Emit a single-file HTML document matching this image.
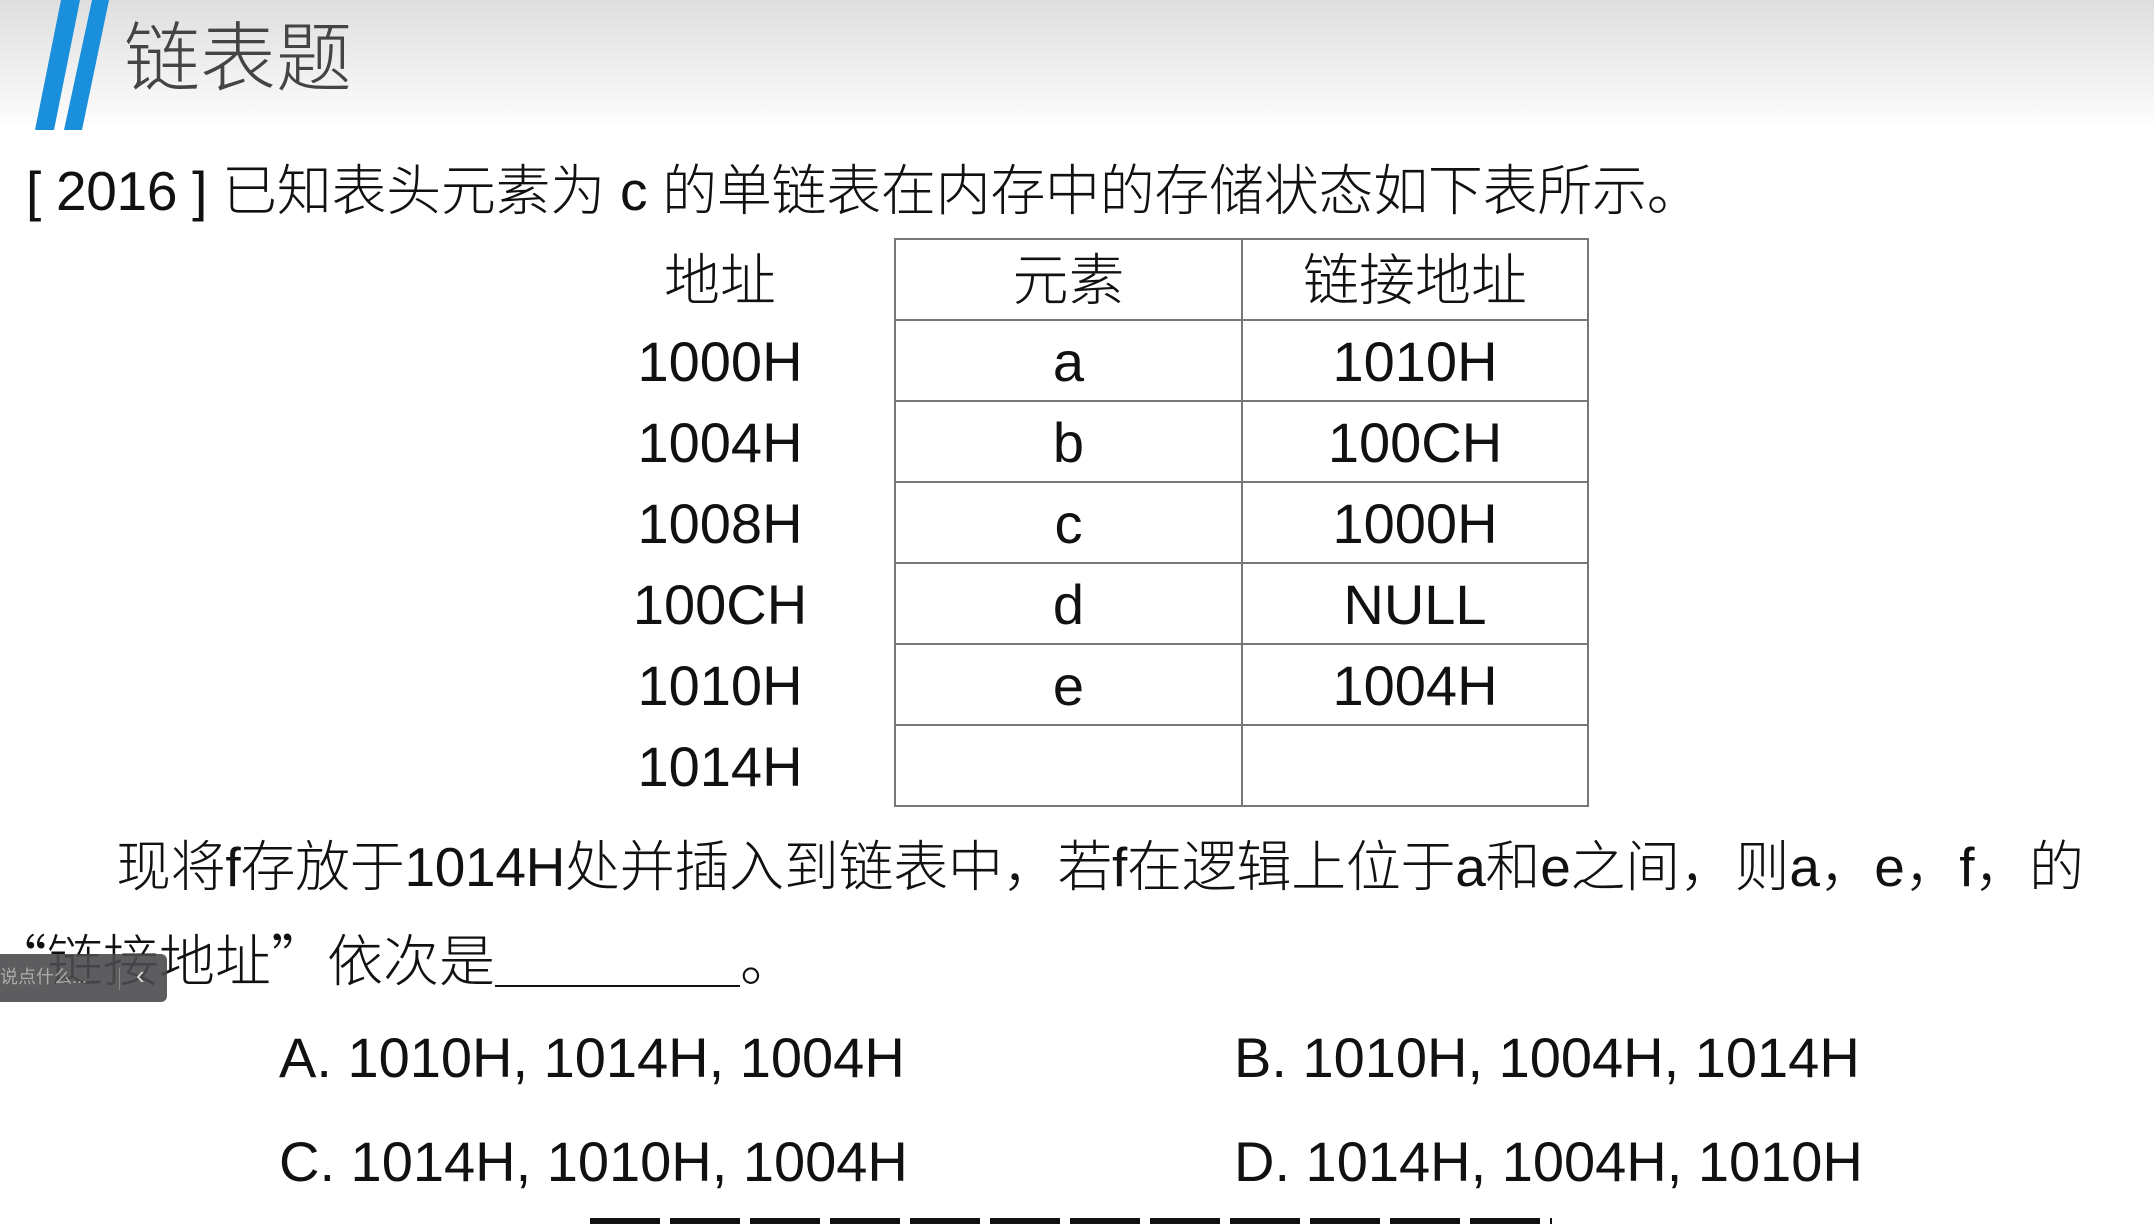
<!DOCTYPE html>
<html><head><meta charset="utf-8"><style>
html,body{margin:0;padding:0;width:2154px;height:1224px;overflow:hidden;background:#fff}
body{position:relative;font-family:"Liberation Sans","Noto Sans CJK SC",sans-serif;color:#111}
.a{position:absolute;white-space:nowrap;line-height:1}
.hdr{position:absolute;left:0;top:0;width:2154px;height:130px;background:linear-gradient(#dedede,#fbfbfb 90%,#fff)}
.t{font-size:56px;font-weight:300}
.q{font-family:"Noto Sans CJK SC",sans-serif}
.c{position:absolute;text-align:center;font-size:56px;line-height:81px;font-weight:300}
.h{position:absolute;background:#777;height:2px;left:894px;width:695px}
.v{position:absolute;background:#777;width:2px;top:238px;height:569px}
</style></head><body>
<div class="hdr"></div>
<svg class="a" style="left:0;top:0" width="130" height="135">
<polygon points="61,0 80,0 54,130 35,130" fill="#1a90dc"/>
<polygon points="92,0 109,0 82,130 64,130" fill="#1a90dc"/>
</svg>
<div class="a" style="left:124px;top:22px;font-size:76px;color:#444;font-weight:300">链表题</div>
<div class="a t" style="left:26px;top:164px;font-size:55px;letter-spacing:-0.3px">[ 2016 ] 已知表头元素为 c 的单链表在内存中的存储状态如下表所示。</div>

<div class="h" style="top:238px"></div>
<div class="h" style="top:319px"></div>
<div class="h" style="top:400px"></div>
<div class="h" style="top:481px"></div>
<div class="h" style="top:562px"></div>
<div class="h" style="top:643px"></div>
<div class="h" style="top:724px"></div>
<div class="h" style="top:805px"></div>
<div class="v" style="left:894px"></div>
<div class="v" style="left:1241px"></div>
<div class="v" style="left:1587px"></div>

<div class="c" style="left:560px;width:320px;top:240px">地址<br>1000H<br>1004H<br>1008H<br>100CH<br>1010H<br>1014H</div>
<div class="c" style="left:896px;width:345px;top:240px">元素<br>a<br>b<br>c<br>d<br>e<br>&nbsp;</div>
<div class="c" style="left:1243px;width:344px;top:240px">链接地址<br>1010H<br>100CH<br>1000H<br>NULL<br>1004H<br>&nbsp;</div>

<div class="a t" style="left:116px;top:840px;font-size:55px;letter-spacing:-0.3px">现将f存放于1014H处并插入到链表中，若f在逻辑上位于a和e之间，则a，e，f，的</div>
<div class="a t" style="left:-9px;top:930px"><span class="q">“</span>链接地址<span class="q">”</span>依次是<span style="display:inline-block;width:245px;border-bottom:2px solid #111;height:50px;vertical-align:-6px"></span>。</div>

<div class="a" style="left:0;top:954px;width:167px;height:48px;background:rgba(75,75,78,0.9);border-radius:0 6px 6px 0"></div>
<div class="a" style="left:0;top:968px;font-size:18px;color:#aaa">说点什么...</div>
<div class="a" style="left:119px;top:968px;width:1px;height:22px;background:#888"></div>
<div class="a" style="left:136px;top:962px;font-size:26px;color:#ddd">‹</div>

<div class="a t" style="left:279px;top:1030px">A. 1010H, 1014H, 1004H</div>
<div class="a t" style="left:1234px;top:1030px">B. 1010H, 1004H, 1014H</div>
<div class="a t" style="left:279px;top:1134px">C. 1014H, 1010H, 1004H</div>
<div class="a t" style="left:1234px;top:1134px">D. 1014H, 1004H, 1010H</div>
<div class="a" style="left:590px;top:1218px;width:962px;height:6px;background:repeating-linear-gradient(90deg,#111 0 70px,#fff 70px 80px)"></div>
</body></html>
